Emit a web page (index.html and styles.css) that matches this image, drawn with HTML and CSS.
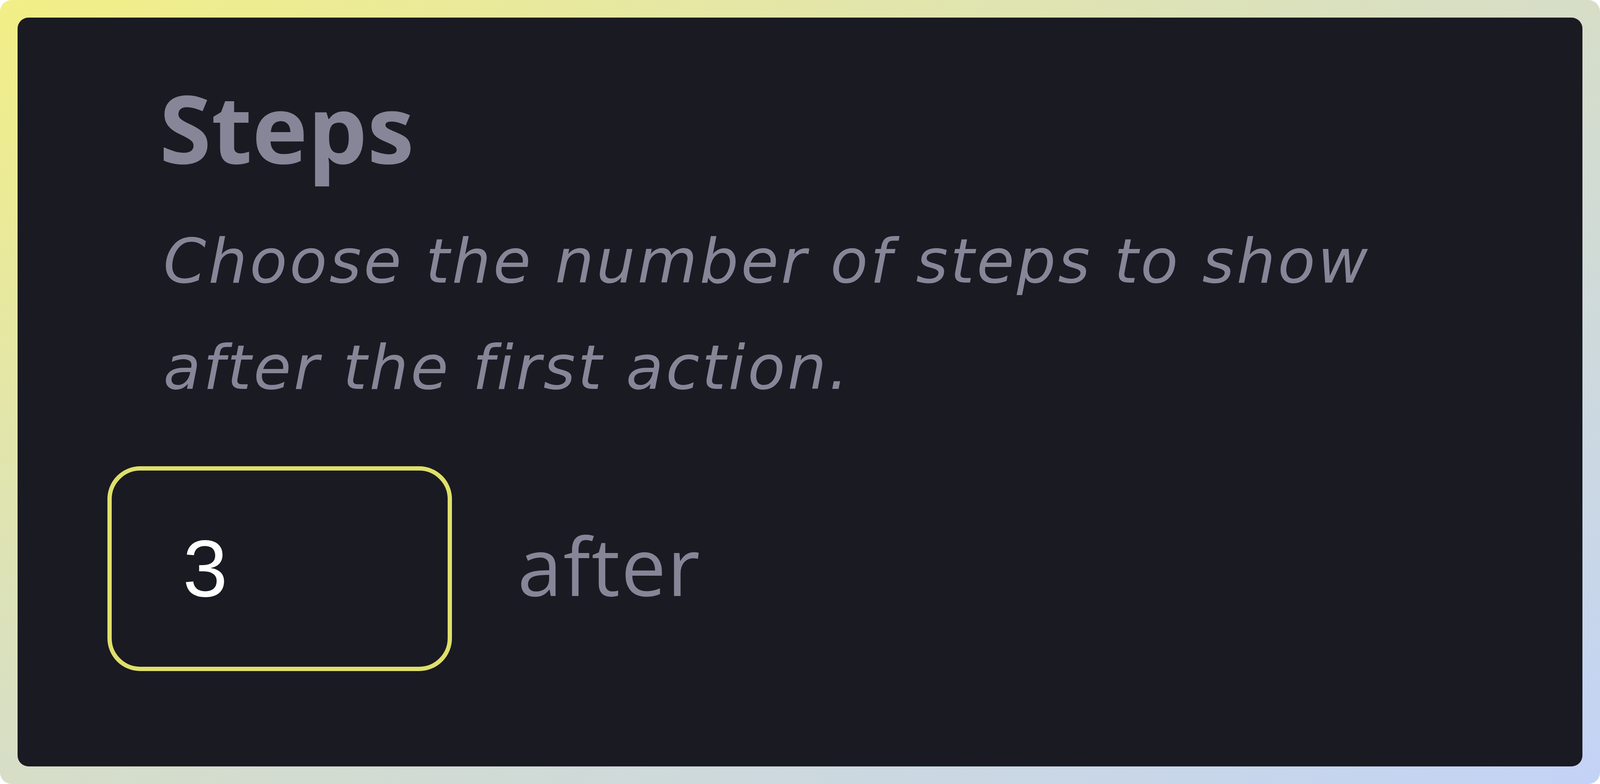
FILE: index.html
```html
<!DOCTYPE html>
<html lang="en">
<head>
    <meta charset="UTF-8">
    <meta name="viewport" content="width=device-width, initial-scale=1.0">
    <title>Steps</title>
    <link rel="stylesheet" href="styles.css">
</head>
<body>
    <div class="frame">
        <div class="card">
            <h2 class="title">Steps</h2>
            <p class="hint">Choose the number of steps to show<br>after the first action.</p>
            <div class="row">
                <div class="field">3</div>
                <span class="label">after</span>
            </div>
        </div>
    </div>
</body>
</html>
```

FILE: styles.css
```css
html, body {
    margin: 0;
    padding: 0;
    overflow: hidden;
    background: #ffffff;
}
.frame {
    height: 2006px;
    box-sizing: border-box;
    padding: 45px;
    border-radius: 30px;
    background: linear-gradient(to bottom right, #f2ef86, #d6dec8 50%, #c3d3f6);
}
.card {
    height: 100%;
    box-sizing: border-box;
    background-color: #1a1a22;
    border-radius: 28px;
    padding: 0 0 0 230px;
    font-family: "Open Sans", sans-serif;
    color: #868698;
}
.title {
    margin: 0;
    padding: 131px 0 0 133px;
    font-size: 241px;
    font-weight: 700;
    line-height: 300px;
}
.hint {
    margin: 0;
    padding: 57px 0 0 143px;
    font-family: "DejaVu Sans", sans-serif;
    font-size: 157px;
    font-style: italic;
    font-weight: 400;
    line-height: 272px;
    letter-spacing: 6px;
}
.row {
    display: flex;
    align-items: center;
    gap: 168px;
    margin-top: 116px;
}
.field {
    width: 882px;
    height: 524px;
    box-sizing: border-box;
    border: 11px solid #dfe06a;
    border-radius: 84px;
    padding-left: 182px;
    display: flex;
    align-items: center;
    font-family: "Liberation Sans", Arial, sans-serif;
    font-size: 206px;
    color: #ffffff;
}
.label {
    font-size: 205px;
    font-weight: 400;
    color: #868698;
    letter-spacing: 3px;
    padding-bottom: 20px;
}
```
